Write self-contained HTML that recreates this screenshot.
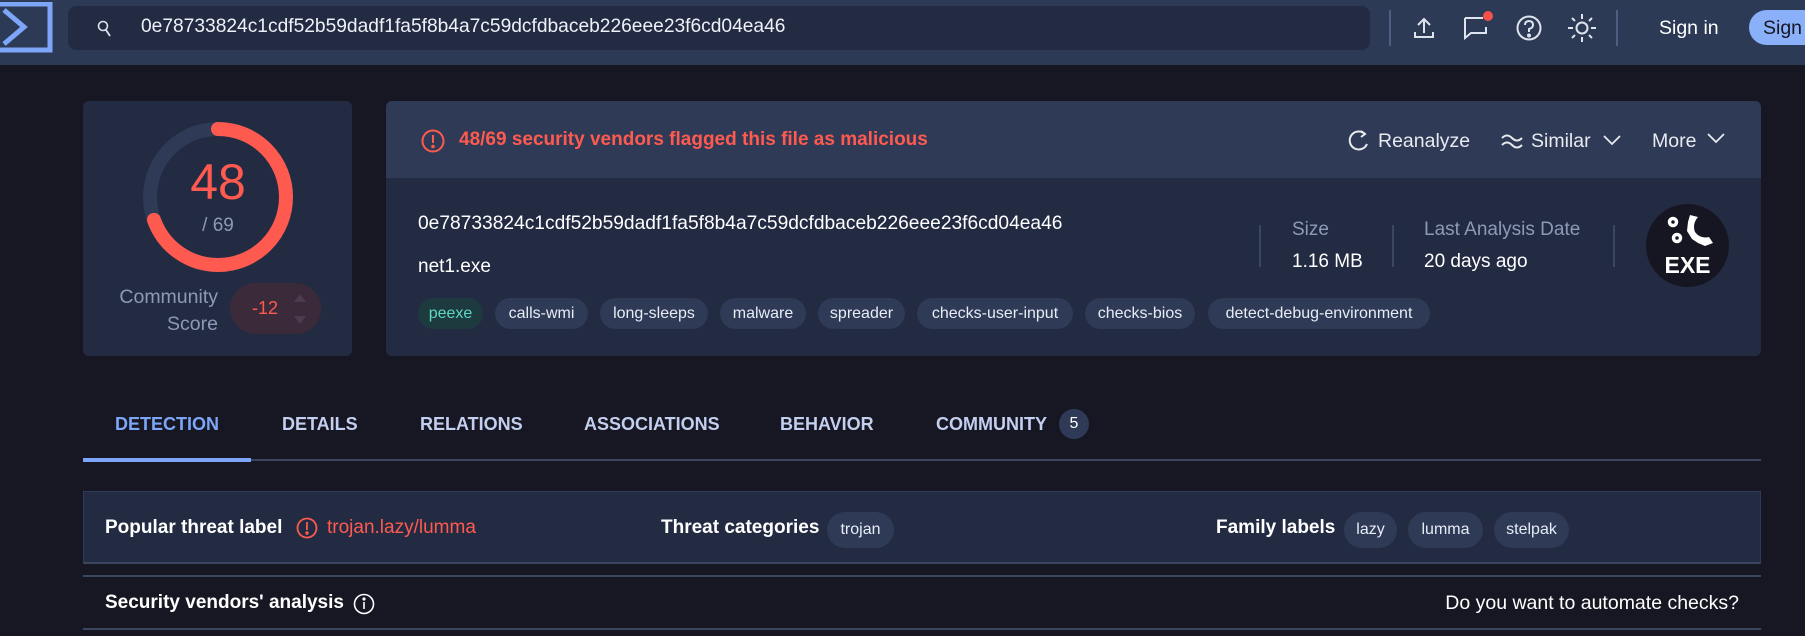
<!DOCTYPE html>
<html><head><meta charset="utf-8"><style>
*{margin:0;padding:0;box-sizing:border-box}
body{width:1805px;height:636px;background:#171723;font-family:"Liberation Sans",sans-serif;position:relative;overflow:hidden;color:#fff}
.a{position:absolute;white-space:nowrap}
.pill{position:absolute;height:31px;border-radius:16px;background:#2e3a56;color:#e8ecf5;font-size:16px;line-height:31px;text-align:center}
.tab{position:absolute;top:414px;font-size:18px;font-weight:bold;color:#c3cfee}
.lbl{color:#8e9ab5;font-size:18px}
</style></head><body>
<div class="a" style="left:0;top:0;width:1805px;height:65px;background:#2d3a56"></div>
<svg class="a" style="left:0;top:2px" width="54" height="52"><rect x="-4" y="2" width="54" height="46" fill="none" stroke="#7ea6f8" stroke-width="5"/><path d="M4 8 L24 25 L4 42" fill="none" stroke="#7ea6f8" stroke-width="5"/></svg>
<div class="a" style="left:68px;top:6px;width:1302px;height:44px;background:#232b43;border-radius:8px"></div>
<svg class="a" style="left:97px;top:20px" width="16" height="18"><circle cx="6" cy="6" r="4.5" fill="none" stroke="#dfe3ee" stroke-width="1.6"/><path d="M9 10 L13 16" stroke="#dfe3ee" stroke-width="1.8"/></svg>
<div class="a" style="left:141px;top:16px;font-size:19.2px;color:#eef1f7">0e78733824c1cdf52b59dadf1fa5f8b4a7c59dcfdbaceb226eee23f6cd04ea46</div>
<div class="a" style="left:1389px;top:10px;width:2px;height:36px;background:#4e5d80"></div>
<svg class="a" style="left:1412px;top:16px" width="24" height="24" fill="none" stroke="#dfe3ee" stroke-width="2"><path d="M12 17 V3 M6 9 L12 3 L18 9 M3 16 V21 H21 V16"/></svg>
<svg class="a" style="left:1462px;top:10px" width="34" height="30" fill="none" stroke="#dfe3ee" stroke-width="2"><path d="M3 8 H21 M3 8 V28 L9 23 H24 V17"/><circle cx="26" cy="6" r="5" fill="#f7514a" stroke="none"/></svg>
<svg class="a" style="left:1515px;top:14px" width="28" height="28" fill="none" stroke="#dfe3ee" stroke-width="2"><circle cx="14" cy="14" r="11.5"/><path d="M10 11 Q10 7 14 7 Q18 7 18 11 Q18 14 14 15 V18"/><circle cx="14" cy="21.5" r="1" fill="#dfe3ee"/></svg>
<svg class="a" style="left:1566px;top:12px" width="32" height="32" fill="none" stroke="#dfe3ee" stroke-width="2"><circle cx="16" cy="16" r="5.5"/><path d="M16 2 V7 M16 25 V30 M2 16 H7 M25 16 H30 M6 6 L9 9 M23 23 L26 26 M6 26 L9 23 M23 9 L26 6"/></svg>
<div class="a" style="left:1616px;top:10px;width:2px;height:36px;background:#4e5d80"></div>
<div class="a" style="left:1659px;top:17px;font-size:19.5px;color:#fff">Sign in</div>
<div class="a" style="left:1749px;top:10px;width:80px;height:35px;border-radius:18px;background:#8ab0f9"></div>
<div class="a" style="left:1763px;top:17px;font-size:19.5px;color:#161622">Sign</div>

<div class="a" style="left:83px;top:101px;width:269px;height:255px;background:#232b43;border-radius:6px"></div>
<svg class="a" style="left:135px;top:114px" width="166" height="166"><circle cx="83" cy="83" r="68" fill="none" stroke="#2e3a56" stroke-width="14"/><circle cx="83" cy="83" r="68" fill="none" stroke="#ff5a4f" stroke-width="14" stroke-linecap="round" stroke-dasharray="297 500" transform="rotate(-90 83 83)"/></svg>
<div class="a" style="left:138px;top:153px;width:160px;text-align:center;font-size:50px;color:#ff5a4f">48</div>
<div class="a" style="left:138px;top:215px;width:160px;text-align:center;font-size:19px;color:#8e9ab5">/ 69</div>
<div class="a lbl" style="left:90px;top:284px;width:128px;text-align:right;line-height:27px;font-size:19.5px">Community<br>Score</div>
<div class="a" style="left:230px;top:283px;width:91px;height:51px;border-radius:26px;background:#3a2a3a"></div>
<div class="a" style="left:252px;top:298px;font-size:18px;color:#ff5a4f">-12</div>
<svg class="a" style="left:293px;top:293px" width="14" height="32" fill="#4a3c4c"><path d="M1 9 L7 1 L13 9Z M1 23 L7 31 L13 23Z"/></svg>

<div class="a" style="left:386px;top:101px;width:1375px;height:255px;background:#232b43;border-radius:6px;overflow:hidden"><div style="height:77px;background:#2e3a56"></div></div>
<svg class="a" style="left:421px;top:129px" width="24" height="24" fill="none" stroke="#ff5a4f" stroke-width="2"><circle cx="12" cy="12" r="10.5"/><path d="M12 6 V14"/><circle cx="12" cy="17.5" r="0.8" fill="#ff5a4f"/></svg>
<div class="a" style="left:459px;top:129px;font-size:19px;font-weight:bold;color:#ff5a4f">48/69 security vendors flagged this file as malicious</div>
<svg class="a" style="left:1348px;top:128px" width="22" height="26" fill="none" stroke="#e8eaf0" stroke-width="2"><path d="M17 6 A9 9 0 1 0 19 16"/><path d="M13 3 L17 6 L13 9"/></svg>
<div class="a" style="left:1378px;top:130px;font-size:19.5px;color:#e8eaf0">Reanalyze</div>
<svg class="a" style="left:1500px;top:132px" width="24" height="18" fill="none" stroke="#e8eaf0" stroke-width="2"><path d="M2 6 Q7 1 12 6 Q17 11 22 6 M2 13 Q7 8 12 13 Q17 18 22 13"/></svg>
<div class="a" style="left:1531px;top:130px;font-size:19.5px;color:#e8eaf0">Similar</div>
<svg class="a" style="left:1603px;top:134px" width="18" height="12" fill="none" stroke="#e8eaf0" stroke-width="1.8"><path d="M1 2 L9 10 L17 2"/></svg>
<div class="a" style="left:1652px;top:130px;font-size:19.5px;color:#e8eaf0">More</div>
<svg class="a" style="left:1707px;top:132px" width="18" height="12" fill="none" stroke="#e8eaf0" stroke-width="1.8"><path d="M1 2 L9 10 L17 2"/></svg>

<div class="a" style="left:418px;top:213px;font-size:19.2px;color:#fff">0e78733824c1cdf52b59dadf1fa5f8b4a7c59dcfdbaceb226eee23f6cd04ea46</div>
<div class="a" style="left:418px;top:256px;font-size:19px;color:#fff">net1.exe</div>
<div class="pill" style="left:418px;top:298px;width:65px;background:#1d3b3f;color:#5fd5c4">peexe</div>
<div class="pill" style="left:495px;top:298px;width:93px">calls-wmi</div>
<div class="pill" style="left:600px;top:298px;width:108px">long-sleeps</div>
<div class="pill" style="left:720px;top:298px;width:86px">malware</div>
<div class="pill" style="left:818px;top:298px;width:87px">spreader</div>
<div class="pill" style="left:917px;top:298px;width:156px">checks-user-input</div>
<div class="pill" style="left:1085px;top:298px;width:110px">checks-bios</div>
<div class="pill" style="left:1208px;top:298px;width:222px">detect-debug-environment</div>

<div class="a" style="left:1259px;top:225px;width:2px;height:42px;background:#3a4662"></div>
<div class="a lbl" style="left:1292px;top:219px;font-size:19px">Size</div>
<div class="a" style="left:1292px;top:251px;font-size:19px;color:#fff">1.16 MB</div>
<div class="a" style="left:1392px;top:225px;width:2px;height:42px;background:#3a4662"></div>
<div class="a lbl" style="left:1424px;top:219px;font-size:19px">Last Analysis Date</div>
<div class="a" style="left:1424px;top:251px;font-size:19px;color:#fff">20 days ago</div>
<div class="a" style="left:1613px;top:225px;width:2px;height:42px;background:#3a4662"></div>
<div class="a" style="left:1646px;top:204px;width:83px;height:83px;border-radius:50%;background:#161622"></div>
<svg class="a" style="left:1660px;top:212px" width="60" height="40"><g fill="none" stroke="#fff" stroke-width="3.5"><circle cx="13" cy="10" r="3.5"/><circle cx="17" cy="26" r="3.5"/></g><path d="M30 3 L38 5 Q32 12 35 20 Q40 27 49 25 L53 31 L45 34 L38 31 L32 27 L27 19 L28 10Z" fill="#fff"/></svg>
<div class="a" style="left:1646px;top:252px;width:83px;text-align:center;font-size:23px;font-weight:bold;color:#fff">EXE</div>

<div class="tab" style="left:115px;color:#7ea6f8">DETECTION</div>
<div class="tab" style="left:282px">DETAILS</div>
<div class="tab" style="left:420px">RELATIONS</div>
<div class="tab" style="left:584px">ASSOCIATIONS</div>
<div class="tab" style="left:780px">BEHAVIOR</div>
<div class="tab" style="left:936px">COMMUNITY</div>
<div class="a" style="left:1059px;top:409px;width:30px;height:30px;border-radius:15px;background:#2e3a56;color:#fff;font-size:16px;line-height:30px;text-align:center">5</div>
<div class="a" style="left:83px;top:459px;width:1678px;height:2px;background:#3a4560"></div>
<div class="a" style="left:83px;top:458px;width:168px;height:4px;background:#7ea6f8"></div>

<div class="a" style="left:83px;top:491px;width:1678px;height:73px;background:#232b43;border:1px solid #2e3a56;border-bottom:2px solid #3a4560"></div>
<div class="a" style="left:105px;top:517px;font-size:19px;font-weight:bold;color:#fff">Popular threat label</div>
<svg class="a" style="left:296px;top:517px" width="22" height="22" fill="none" stroke="#ff5a4f" stroke-width="1.8"><circle cx="11" cy="11" r="9.5"/><path d="M11 5 V13"/><circle cx="11" cy="16" r="0.8" fill="#ff5a4f"/></svg>
<div class="a" style="left:327px;top:517px;font-size:19px;color:#ff5a4f">trojan.lazy/lumma</div>
<div class="a" style="left:661px;top:517px;font-size:19px;font-weight:bold;color:#fff">Threat categories</div>
<div class="pill" style="left:827px;top:512px;width:67px;height:36px;line-height:36px;border-radius:18px">trojan</div>
<div class="a" style="left:1216px;top:517px;font-size:19px;font-weight:bold;color:#fff">Family labels</div>
<div class="pill" style="left:1344px;top:512px;width:53px;height:36px;line-height:36px;border-radius:18px">lazy</div>
<div class="pill" style="left:1408px;top:512px;width:75px;height:36px;line-height:36px;border-radius:18px">lumma</div>
<div class="pill" style="left:1494px;top:512px;width:75px;height:36px;line-height:36px;border-radius:18px">stelpak</div>

<div class="a" style="left:83px;top:575px;width:1678px;height:2px;background:#3a4560"></div>
<div class="a" style="left:105px;top:592px;font-size:19px;font-weight:bold;color:#fff">Security vendors' analysis</div>
<svg class="a" style="left:353px;top:593px" width="22" height="22" fill="none" stroke="#fff" stroke-width="1.6"><circle cx="11" cy="11" r="9.5"/><path d="M11 9 V16"/><circle cx="11" cy="6" r="0.8" fill="#fff"/></svg>
<div class="a" style="right:66px;top:592px;font-size:19.5px;color:#fff">Do you want to automate checks?</div>
<div class="a" style="left:83px;top:628px;width:1678px;height:2px;background:#3a4560"></div>
</body></html>
